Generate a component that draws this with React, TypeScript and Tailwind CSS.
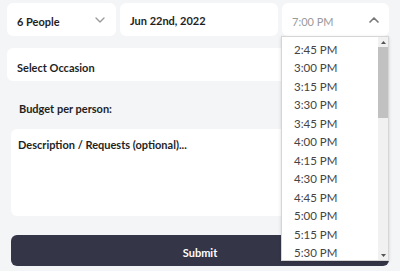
import { ChevronDown, ChevronUp } from "lucide-react";

const times = [
  "2:45 PM",
  "3:00 PM",
  "3:15 PM",
  "3:30 PM",
  "3:45 PM",
  "4:00 PM",
  "4:15 PM",
  "4:30 PM",
  "4:45 PM",
  "5:00 PM",
  "5:15 PM",
  "5:30 PM",
];

export default function App() {
  return (
    <div
      className="relative h-[271px] w-[400px] overflow-hidden bg-[#f4f5f7] text-[11px] leading-[17px] text-[#1f1f1f]"
      style={{ fontFamily: 'Lato, "Open Sans", sans-serif' }}
    >
      <div className="px-[7px] pt-[3px] pr-[11px]">
        {/* Top row */}
        <div className="flex h-[33px] gap-[4px]">
          <div className="flex w-[109px] items-center justify-between rounded-md bg-white pl-[10px] pr-[8px] pt-[4px]">
            <span className="font-bold">6 People</span>
            <ChevronDown size={16} strokeWidth={2} className="-mt-[4px] text-[#9a9a9a]" />
          </div>
          <div className="flex w-[158px] items-center rounded-md bg-white pl-[10px] pt-[1px]">
            <span className="font-bold">Jun 22nd, 2022</span>
          </div>
          <div className="flex flex-1 items-center justify-between rounded-md bg-white pl-[10px] pr-[7px] pt-[4px]">
            <span className="text-[#9a9a9a]">7:00 PM</span>
            <ChevronUp size={16} strokeWidth={2.5} className="-mt-[4px] text-[#777]" />
          </div>
        </div>

        {/* Occasion */}
        <div className="mt-[12px] flex h-[33px] items-center rounded-md bg-white pl-[10px] pt-[5px]">
          <span className="font-bold">Select Occasion</span>
        </div>
      </div>

      <div className="px-[11px]">
        <div className="mt-[19px] pl-[8px] font-bold">Budget per person:</div>

        <div className="mt-[12px] h-[87px] rounded-md bg-white px-[7px] pt-[7px] font-bold">
          Description / Requests (optional)...
        </div>

        <button
          type="button"
          className="mt-[19px] flex h-[31px] w-full items-center justify-center rounded-md bg-[#343648] pt-[3px] font-bold text-white"
        >
          Submit
        </button>
      </div>

      {/* Time dropdown list */}
      <div className="absolute left-[281px] top-[36px] flex h-[225px] w-[108px] border border-[#d6d6d6] bg-white shadow-[0_1px_3px_rgba(0,0,0,0.15)]">
        <div className="flex-1 pl-[12px] pt-[3px] text-[11.5px]">
          {times.map((t) => (
            <div key={t} className="flex h-[18.5px] items-center text-[#444]">
              {t}
            </div>
          ))}
        </div>
        <div className="flex w-[10px] flex-col bg-[#f1f1f1]">
          <div className="flex h-[10px] items-center justify-center">
            <svg width="5" height="3" viewBox="0 0 5 3">
              <path d="M0 3 L2.5 0 L5 3 Z" fill="#555" />
            </svg>
          </div>
          <div className="h-[71px] bg-[#c1c1c1]" />
          <div className="flex-1" />
          <div className="flex h-[10px] items-center justify-center">
            <svg width="5" height="3" viewBox="0 0 5 3">
              <path d="M0 0 L5 0 L2.5 3 Z" fill="#555" />
            </svg>
          </div>
        </div>
      </div>
    </div>
  );
}
